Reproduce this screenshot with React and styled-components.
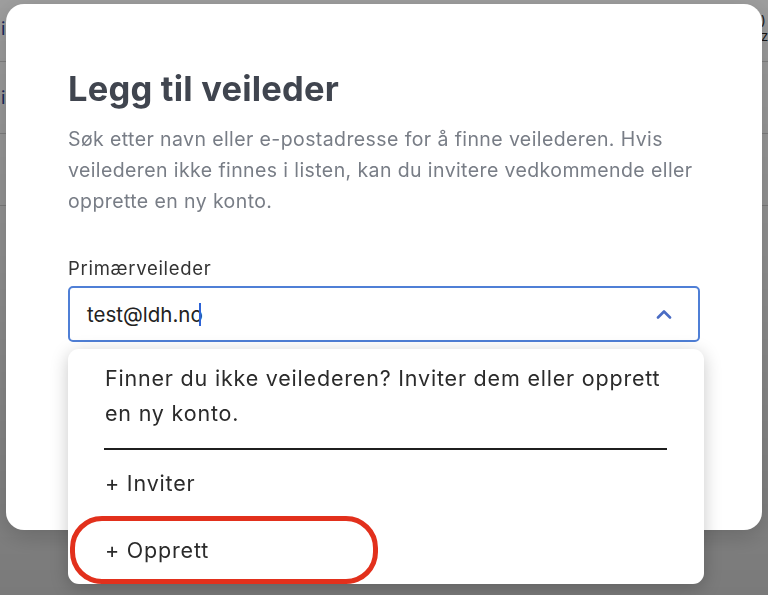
import React from 'react';
import styled, { createGlobalStyle } from 'styled-components';

const GlobalStyle = createGlobalStyle`
  html, body {
    margin: 0;
    padding: 0;
    width: 768px;
    height: 595px;
    overflow: hidden;
    background: #ffffff;
    font-family: Inter, "Noto Sans", "Liberation Sans", sans-serif;
  }
`;

const rows = [
  { id: 1, name: 'i', date: ')', note: 'z', height: 67 },
  { id: 2, name: 'i', date: '', note: '', height: 72 },
  { id: 3, name: '', date: '', note: '', height: 72 },
];

const App = () => {
  return (
    <>
      <GlobalStyle />
      <Page>
        {rows.map((row) => (
          <Row key={row.id} $height={row.height}>
            <NameLink>{row.name}</NameLink>
            <DateCell>
              <span>{row.date}</span>
              <span>{row.note}</span>
            </DateCell>
          </Row>
        ))}
      </Page>

      <Backdrop>
        <Modal>
          <Title>Legg til veileder</Title>
          <Description>
            Søk etter navn eller e-postadresse for å finne veilederen. Hvis
            veilederen ikke finnes i listen, kan du invitere vedkommende eller
            opprette en ny konto.
          </Description>

          <Label>Primærveileder</Label>
          <Field>
            <InputBox>
              <InputText>
                test@ldh.no
                <Caret />
              </InputText>
              <Chevron viewBox="0 0 16 10" aria-hidden="true">
                <path d="M2 8.5 L8 2.5 L14 8.5" />
              </Chevron>
            </InputBox>

            <Dropdown>
              <Message>
                Finner du ikke veilederen? Inviter dem eller opprett en ny konto.
              </Message>
              <Divider />
              <Option>+ Inviter</Option>
              <Option $marked>+ Opprett</Option>
            </Dropdown>
          </Field>
        </Modal>
      </Backdrop>
    </>
  );
};

export default App;

// Styled Components...
const Page = styled.div`
  margin-top: -5px;
  width: 768px;
`;

const Row = styled.div`
  display: flex;
  align-items: center;
  justify-content: space-between;
  height: ${(p) => p.$height}px;
  border-bottom: 1px solid #d4d4d4;
  box-sizing: border-box;
`;

const NameLink = styled.span`
  padding-left: 1px;
  font-size: 18px;
  color: #2b3f9a;
  white-space: nowrap;
`;

const DateCell = styled.div`
  display: flex;
  flex-direction: column;
  width: 7px;
  font-size: 13px;
  line-height: 16px;
  color: #222;
  white-space: nowrap;
`;

const Backdrop = styled.div`
  position: fixed;
  inset: 0;
  display: flex;
  align-items: flex-start;
  padding: 4px 6px;
  background: linear-gradient(rgba(0, 0, 0, 0.38), rgba(0, 0, 0, 0.52));
`;

const Modal = styled.div`
  width: 756px;
  height: 526px;
  box-sizing: border-box;
  padding: 65px 63px 0 62px;
  background: #ffffff;
  border-radius: 18px;
  box-shadow: 0 6px 24px rgba(0, 0, 0, 0.18);
`;

const Title = styled.h2`
  margin: 0;
  font-size: 34.5px;
  line-height: 40px;
  font-weight: 700;
  color: #40454f;
  letter-spacing: 0.2px;
`;

const Description = styled.p`
  margin: 15px 0 0;
  max-width: 632px;
  font-size: 19.5px;
  line-height: 31px;
  letter-spacing: 0.4px;
  color: #787d86;
`;

const Label = styled.div`
  margin-top: 39px;
  font-size: 18.5px;
  line-height: 24px;
  letter-spacing: 0.7px;
  color: #333333;
`;

const Field = styled.div`
  position: relative;
  margin-top: 6px;
  width: 632px;
`;

const InputBox = styled.div`
  display: flex;
  align-items: center;
  justify-content: space-between;
  height: 56px;
  box-sizing: border-box;
  padding: 0 26px 0 17px;
  border: 2px solid #4f7fd6;
  border-radius: 5px;
  background: #ffffff;
`;

const InputText = styled.span`
  display: flex;
  align-items: center;
  font-size: 20.5px;
  color: #222222;
`;

const Caret = styled.span`
  display: inline-block;
  width: 2px;
  height: 23px;
  margin-left: -4px;
  background: #2d63d6;
`;

const Chevron = styled.svg`
  width: 16px;
  height: 10px;
  fill: none;
  stroke: #4a6cc4;
  stroke-width: 2.6;
  stroke-linecap: round;
  stroke-linejoin: round;
`;

const Dropdown = styled.div`
  position: absolute;
  top: calc(100% + 7px);
  left: 0;
  right: -4px;
  padding-top: 12px;
  background: #ffffff;
  border-radius: 11px;
  box-shadow: 0 4px 18px rgba(0, 0, 0, 0.22);
`;

const Message = styled.p`
  margin: 0;
  padding: 0 30px 0 37px;
  font-size: 21.5px;
  line-height: 35px;
  letter-spacing: 0.8px;
  color: #2b2b2b;
`;

const Divider = styled.hr`
  margin: 17px 37px 0 36px;
  height: 2px;
  border: none;
  background: #1f1f1f;
`;

const Option = styled.div`
  position: relative;
  padding: 16px 37px 16px;
  font-size: 21.5px;
  line-height: 35px;
  letter-spacing: 0.8px;
  color: #2b2b2b;

  ${(p) =>
    p.$marked &&
    `
    &::after {
      content: '';
      position: absolute;
      left: 2px;
      top: -1px;
      width: 308px;
      height: 68px;
      box-sizing: border-box;
      border: 5px solid #e2301c;
      border-radius: 32px;
    }
  `}
`;
